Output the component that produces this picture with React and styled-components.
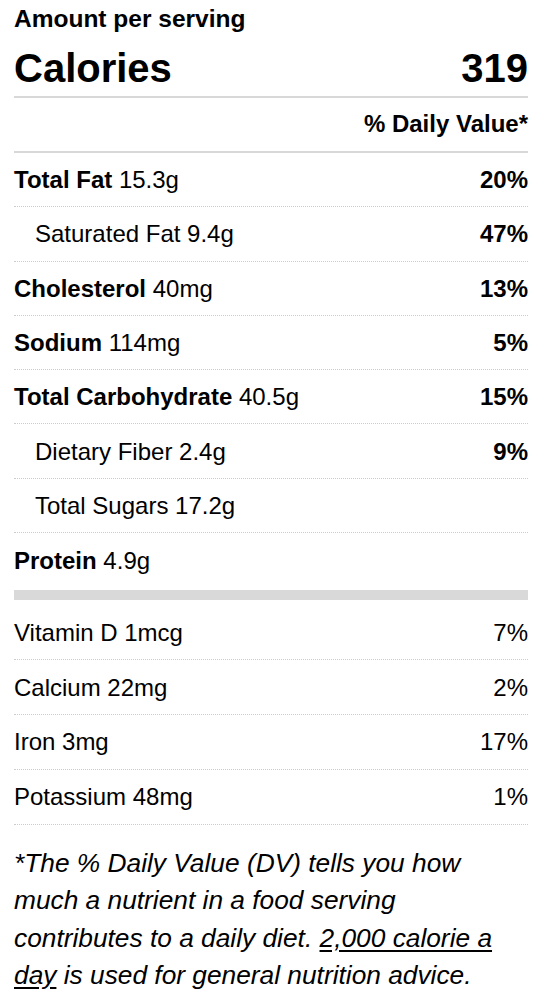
import React from "react";
import styled, { createGlobalStyle } from "styled-components";

const GlobalStyle = createGlobalStyle`
  html, body {
    margin: 0;
    padding: 0;
    background: #fff;
  }
  body {
    font-family: "Liberation Sans", Arial, Helvetica, sans-serif;
    color: #000;
  }
`;

const Label = styled.div`
  padding: 5px 14px 0;
  width: 514px;
`;

const Heading = styled.div`
  font-size: 24.5px;
  line-height: 28px;
  font-weight: 700;
`;

const CaloriesRow = styled.div`
  display: flex;
  justify-content: space-between;
  align-items: baseline;
  margin-top: 13px;
  padding-bottom: 6px;
  border-bottom: 2px solid #d8d8d8;
  font-size: 40px;
  line-height: 44px;
  font-weight: 700;
`;

const DailyHeader = styled.div`
  text-align: right;
  font-size: 24px;
  line-height: 25px;
  font-weight: 700;
  padding: 13px 0 15px;
  border-bottom: 2px solid #d8d8d8;
`;

const Row = styled.div`
  display: flex;
  justify-content: space-between;
  align-items: center;
  box-sizing: border-box;
  height: ${(p) => p.$height || 54.3}px;
  padding-left: ${(p) => (p.$indent ? 21 : 0)}px;
  border-bottom: ${(p) => (p.$last ? "none" : "1px dotted #cccccc")};
  font-size: 24px;
  line-height: 25px;
`;

const Name = styled.span`
  font-weight: ${(p) => (p.$bold ? 700 : 400)};
`;

const Percent = styled.span`
  font-weight: ${(p) => (p.$bold ? 700 : 400)};
`;

const ThickBar = styled.div`
  height: 10px;
  background: #d9d9d9;
  margin: 3px 0 5px;
`;

const Footnote = styled.p`
  margin: 20px 0 0;
  font-size: 26.3px;
  line-height: 37.5px;
  font-style: italic;
`;

const Underlined = styled.span`
  text-decoration: underline;
  text-underline-offset: 3px;
`;

const nutrients = [
  { bold: "Total Fat", amount: "15.3g", dv: "20%" },
  { name: "Saturated Fat", amount: "9.4g", dv: "47%", indent: true },
  { bold: "Cholesterol", amount: "40mg", dv: "13%" },
  { bold: "Sodium", amount: "114mg", dv: "5%" },
  { bold: "Total Carbohydrate", amount: "40.5g", dv: "15%" },
  { name: "Dietary Fiber", amount: "2.4g", dv: "9%", indent: true },
  { name: "Total Sugars", amount: "17.2g", indent: true },
  { bold: "Protein", amount: "4.9g", last: true },
];

const vitamins = [
  { name: "Vitamin D", amount: "1mcg", dv: "7%" },
  { name: "Calcium", amount: "22mg", dv: "2%" },
  { name: "Iron", amount: "3mg", dv: "17%" },
  { name: "Potassium", amount: "48mg", dv: "1%" },
];

const App = () => {
  return (
    <>
      <GlobalStyle />
      <Label>
        <Heading>Amount per serving</Heading>
        <CaloriesRow>
          <span>Calories</span>
          <span>319</span>
        </CaloriesRow>
        <DailyHeader>% Daily Value*</DailyHeader>

        {nutrients.map((n) => (
          <Row key={n.bold || n.name} $indent={n.indent} $last={n.last}>
            <span>
              {n.bold ? <Name $bold>{n.bold}</Name> : <Name>{n.name}</Name>} {n.amount}
            </span>
            {n.dv && <Percent $bold>{n.dv}</Percent>}
          </Row>
        ))}

        <ThickBar />

        {vitamins.map((v) => (
          <Row key={v.name} $height={54.8}>
            <span>
              {v.name} {v.amount}
            </span>
            <Percent>{v.dv}</Percent>
          </Row>
        ))}

        <Footnote>
          *The % Daily Value (DV) tells you how much a nutrient in a food serving
          contributes to a daily diet. <Underlined>2,000 calorie a day</Underlined> is
          used for general nutrition advice.
        </Footnote>
      </Label>
    </>
  );
};

export default App;
